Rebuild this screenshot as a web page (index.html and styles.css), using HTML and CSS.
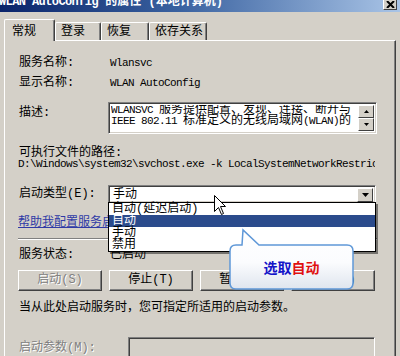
FILE: index.html
```html
<!DOCTYPE html>
<html lang="zh-CN">
<head>
    <meta charset="UTF-8">
    <title>WLAN AutoConfig 的属性</title>
    <link rel="stylesheet" href="styles.css">
</head>
<body>
    <div class="titlebar">
        <span class="title"><span class="en">WLAN AutoConfig</span> 的属性 (本地计算机)</span>
        <span class="close">
            <svg width="9" height="7" viewBox="0 0 9 7"><path d="M1 0 L8 7 M8 0 L1 7" stroke="#000" stroke-width="2"/></svg>
        </span>
    </div>

    <div class="tabs">
        <div class="tab active">常规</div>
        <div class="tab w46">登录</div>
        <div class="tab w48">恢复</div>
        <div class="tab w58">依存关系</div>
    </div>

    <div class="panel">
        <div class="field">
            <span class="label">服务名称:</span>
            <span class="value en">Wlansvc</span>
        </div>
        <div class="field gap8">
            <span class="label">显示名称:</span>
            <span class="value en">WLAN AutoConfig</span>
        </div>
        <div class="field desc-row">
            <span class="label desc-label">描述:</span>
            <div class="desc-box sunken">
                <div class="desc-text">
                    <span class="en">WLANSVC </span>服务提供配置、发现、连接、断开与<br>
                    <span class="en">IEEE 802.11 </span>标准定义的无线局域网<span class="en">(WLAN)</span>的
                </div>
                <div class="scroll">
                    <span class="sbtn"><svg width="5" height="3" viewBox="0 0 5 3"><path d="M2.5 0 L5 3 L0 3 Z" fill="#000"/></svg></span>
                    <span class="sbtn"><svg width="5" height="3" viewBox="0 0 5 3"><path d="M0 0 L5 0 L2.5 3 Z" fill="#000"/></svg></span>
                </div>
            </div>
        </div>

        <div class="path-label">可执行文件的路径:</div>
        <div class="path en">D:\Windows\system32\svchost.exe -k LocalSystemNetworkRestricted</div>

        <div class="field combo-row">
            <span class="label">启动类型(E):</span>
            <div class="combo sunken">
                <span class="combo-text">手动</span>
                <span class="combo-btn"><svg width="7" height="4" viewBox="0 0 7 4"><path d="M0 0 L7 0 L3.5 4 Z" fill="#000"/></svg></span>
                <ul class="droplist">
                    <li>自动(延迟启动)</li>
                    <li class="selected">自动</li>
                    <li>手动</li>
                    <li>禁用</li>
                </ul>
            </div>
        </div>

        <a class="link" href="#">帮助我配置服务启动选项。</a>

        <div class="separator"></div>

        <div class="field gap9">
            <span class="label">服务状态:</span>
            <span class="value">已启动</span>
        </div>

        <div class="buttons">
            <span class="btn disabled">启动(S)</span>
            <span class="btn">停止(T)</span>
            <span class="btn">暂停(P)</span>
            <span class="btn">恢复(R)</span>
        </div>

        <div class="note">当从此处启动服务时，您可指定所适用的启动参数。</div>

        <div class="field params-row">
            <span class="label params-label">启动参数(M):</span>
            <div class="params-box sunken"></div>
        </div>
    </div>

    <!-- pointer over the open list -->
    <svg class="cursor" width="13" height="21" viewBox="0 0 13 21">
        <path d="M0.5 0.5 L0.5 16.5 L4.5 12.5 L7.5 19.5 L9.5 18.5 L6.5 11.5 L11.5 11.5 Z" fill="#fff" stroke="#000" stroke-width="1"/>
    </svg>

    <!-- callout bubble -->
    <div class="callout">
        <svg width="128" height="64" viewBox="0 0 128 64">
            <defs>
                <linearGradient id="bubble" x1="0" y1="0" x2="0" y2="1">
                    <stop offset="0" stop-color="#ffffff"/>
                    <stop offset="0.55" stop-color="#fbfcfe"/>
                    <stop offset="1" stop-color="#dfe5ee"/>
                </linearGradient>
            </defs>
            <path d="M8 17 L14 17 L15 2 L31 17 L119 17 Q125 17 125 23 L125 55 Q125 61 119 61 L8 61 Q2 61 2 55 L2 23 Q2 17 8 17 Z"
                  fill="url(#bubble)" stroke="#5f98d8" stroke-width="1.5"/>
        </svg>
        <span class="callout-text"><span class="blue">选取</span><span class="red">自动</span></span>
    </div>
</body>
</html>
```

FILE: styles.css
```css
body {
    margin: 0;
    width: 400px;
    height: 356px;
    overflow: hidden;
    position: relative;
    background-color: #d4d0c8;
    color: #000;
    font-family: "Liberation Mono", "Noto Sans CJK SC", monospace;
    font-size: 12px;
}
.en {
    font-size: 11px;
    letter-spacing: -0.6px;
}

/* title bar */
.titlebar {
    height: 12px;
    display: flex;
    align-items: flex-end;
    overflow: hidden;
    background: linear-gradient(to right, #0a246a 0%, #3a62a0 45%, #a9c4e6 100%);
}
.title {
    color: #fff;
    font-weight: bold;
    line-height: 14px;
    margin-bottom: 3px;
    margin-left: -1px;
    white-space: nowrap;
}
.title .en {
    font-size: 12px;
}
.close {
    align-self: flex-start;
    margin-left: auto;
    margin-right: 3px;
    width: 12px;
    height: 9px;
    display: flex;
    align-items: center;
    justify-content: center;
    background-color: #d4d0c8;
    border-right: 1px solid #404040;
    border-bottom: 1px solid #404040;
    border-left: 1px solid #fff;
}

/* tabs */
.tabs {
    display: flex;
    align-items: flex-end;
    height: 22px;
    margin-top: 7px;
    padding-left: 4px;
}
.tab {
    box-sizing: border-box;
    height: 18px;
    margin-bottom: 1px;
    padding: 1px 0 0 5px;
    line-height: 17px;
    border-top: 1px solid #fff;
    border-left: 1px solid #fff;
    border-right: 1px solid #404040;
    box-shadow: inset -1px 0 #808080;
    border-radius: 2px 2px 0 0;
    white-space: nowrap;
}
.tab.active {
    position: relative;
    z-index: 1;
    width: 51px;
    height: 22px;
    margin-bottom: 0;
    padding: 4px 0 0 7px;
    line-height: 17px;
    background-color: #d4d0c8;
}
.w46 { width: 46px; }
.w48 { width: 48px; }
.w58 { width: 58px; }

/* panel */
.panel {
    box-sizing: border-box;
    width: 392px;
    height: 316px;
    margin: -1px 0 0 4px;
    padding: 16px 18px 0 14px;
    border-top: 1px solid #fff;
    border-left: 1px solid #fff;
    border-right: 1px solid #404040;
    box-shadow: inset -1px 0 #808080;
}
.field {
    display: flex;
    line-height: 12px;
    white-space: nowrap;
}
.label {
    flex: none;
    width: 89px;
}
.value {
    padding-left: 2px;
}
.gap8 { margin-top: 8px; }
.gap9 { margin-top: 9px; }

.sunken {
    box-sizing: border-box;
    border-top: 1px solid #808080;
    border-left: 1px solid #808080;
    border-bottom: 1px solid #fff;
    border-right: 1px solid #fff;
    box-shadow: inset 1px 1px #404040, inset -1px -1px #d4d0c8;
}

/* description */
.desc-row {
    margin-top: 13px;
    height: 32px;
}
.desc-label {
    margin-top: 5px;
}
.desc-box {
    display: flex;
    width: 269px;
    height: 32px;
    padding: 2px;
    background-color: #fff;
}
.desc-text {
    flex: 1;
    overflow: hidden;
    line-height: 11px;
}
.scroll {
    display: flex;
    flex-direction: column;
    width: 16px;
}
.sbtn {
    box-sizing: border-box;
    height: 14px;
    display: flex;
    align-items: center;
    justify-content: center;
    background-color: #d4d0c8;
    border-top: 1px solid #fff;
    border-left: 1px solid #fff;
    border-right: 1px solid #404040;
    border-bottom: 1px solid #404040;
}

/* executable path */
.path-label {
    margin-top: 14px;
    line-height: 11px;
}
.path {
    width: 357px;
    margin-left: -1px;
    line-height: 11px;
    white-space: nowrap;
    overflow: hidden;
}

/* startup type */
.combo-row {
    margin-top: 15px;
    line-height: 18px;
}
.combo {
    position: relative;
    display: flex;
    width: 268px;
    height: 18px;
    padding: 2px;
    background-color: #fff;
}
.combo-text {
    flex: 1;
    padding-left: 2px;
    line-height: 14px;
}
.combo-btn {
    box-sizing: border-box;
    width: 16px;
    height: 14px;
    display: flex;
    align-items: center;
    justify-content: center;
    background-color: #d4d0c8;
    border-top: 1px solid #fff;
    border-left: 1px solid #fff;
    border-right: 1px solid #404040;
    border-bottom: 1px solid #404040;
}
.droplist {
    position: absolute;
    z-index: 2;
    top: 16px;
    left: -1px;
    width: 266px;
    margin: 0;
    padding: 0;
    list-style: none;
    background-color: #fff;
    border: 1px solid #000;
    box-shadow: 2px 2px 0 rgba(0, 0, 0, 0.45);
}
.droplist li {
    height: 12px;
    line-height: 12px;
    padding-left: 3px;
}
.droplist li.selected {
    background-color: #2b4b8c;
    color: #fff;
}

.link {
    display: block;
    margin-top: 14px;
    margin-left: -1px;
    line-height: 12px;
    color: #2f3aa6;
    text-decoration: underline;
    white-space: nowrap;
}
.separator {
    margin-top: 9px;
    margin-left: -1px;
    border-top: 1px solid #808080;
    border-bottom: 1px solid #fff;
}

/* buttons */
.buttons {
    display: flex;
    gap: 7px;
    margin: 9px 0 0 -1px;
}
.btn {
    box-sizing: border-box;
    width: 84px;
    height: 21px;
    line-height: 19px;
    text-align: center;
    border-top: 1px solid #fff;
    border-left: 1px solid #fff;
    border-right: 1px solid #404040;
    border-bottom: 1px solid #404040;
    box-shadow: inset -1px -1px #808080;
}
.disabled, .params-label {
    color: #808080;
    text-shadow: 1px 1px 0 #fff;
}

.note {
    margin-top: 11px;
    line-height: 12px;
    white-space: nowrap;
}
.params-row {
    margin-top: 23px;
}
.params-label {
    width: 109px;
    margin-top: 5px;
}
.params-box {
    width: 247px;
    height: 20px;
}

/* overlays */
.cursor {
    position: absolute;
    left: 214px;
    top: 195px;
    z-index: 3;
}
.callout {
    position: absolute;
    left: 228px;
    top: 228px;
    z-index: 4;
    width: 128px;
    height: 64px;
}
.callout svg {
    display: block;
}
.callout-text {
    position: absolute;
    left: 2px;
    right: 3px;
    top: 29px;
    text-align: center;
    font-family: "Noto Sans CJK SC", sans-serif;
    font-size: 14px;
    font-weight: bold;
    line-height: 20px;
}
.blue {
    color: #1414c8;
}
.red {
    color: #e01010;
}
```
